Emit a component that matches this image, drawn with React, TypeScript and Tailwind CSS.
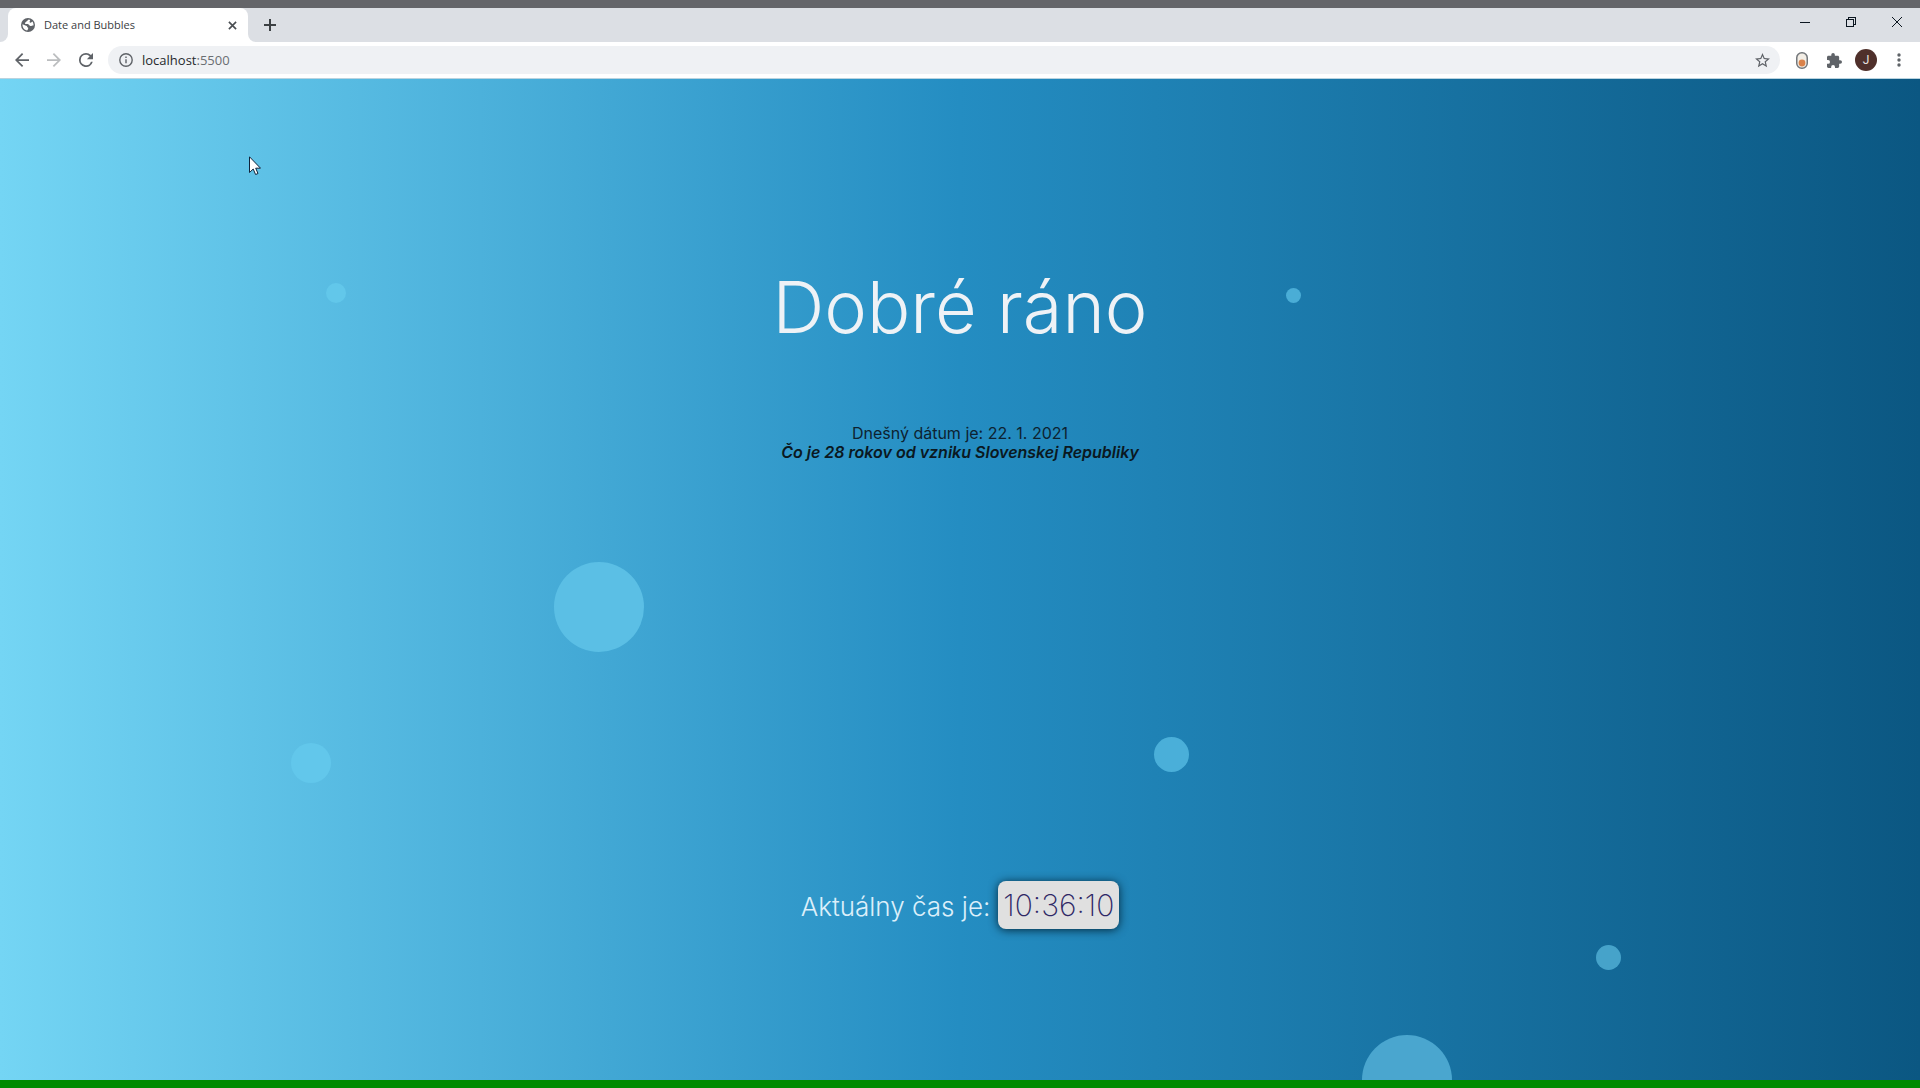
import React from "react";

type Bubble = { id: string; className: string };

const bubbles: Bubble[] = [
  { id: "a", className: "left-[326px] top-[204px] size-5 bg-[#62c7ea]" },
  { id: "b", className: "left-[1286px] top-[209px] size-[15px] bg-[#4aadd6]" },
  { id: "c", className: "left-[554px] top-[483px] size-[90px] bg-[#5bbfe5]" },
  { id: "d", className: "left-[291px] top-[664px] size-10 bg-[#62c7eb]" },
  { id: "e", className: "left-[1154px] top-[658px] size-[35px] bg-[#4aafd9]" },
  { id: "f", className: "left-[1596px] top-[866px] size-[25px] bg-[#46a3ca]" },
  { id: "g", className: "left-[1362px] top-[956px] size-[90px] bg-[#4aa6cf]" },
];

function GlobeIcon() {
  return (
    <svg viewBox="0 0 14 14" className="size-[14px]" aria-hidden="true">
      <circle cx="7" cy="7" r="7" fill="#5f6368" />
      <path d="M8.2 1.6C8.600 2.600 7.800 3.400 6.600 3.500C6.800 4.800 5.800 5.200 5 5.400C5.200 6.200 5.800 6.400 7.200 6.300C8.600 6.300 9 7.400 9.200 8C10 8.200 10.400 8.600 10.400 9.400C11.400 10.200 12.600 8.400 12.600 7C12.600 4.200 10.600 2 8.200 1.600Z" fill="#5f6368" />
      <path d="M7.900 1.500C8.500 2.700 7.700 3.400 6.500 3.600C6.500 4.700 5.600 5 4.800 5.200C4.900 6.200 5.700 6.400 7 6.300C8.300 6.300 8.800 7.200 9 8.200L11.200 8.400C10.500 10.400 8.700 11.500 6.400 12.500V10.600C5.300 10.500 4.900 9.800 4.900 8.800L1.500 5.800C2 3.400 4.600 1.200 7.900 1.500Z" fill="none" />
      <path d="M1.500 6.200 4.400 7.400C5.700 7.500 6.300 8.300 6.300 9.300C7.600 9.500 7.600 10.700 6.200 12.400C3.200 12 1.300 9.500 1.500 6.200ZM7.700 1.500 5.700 3.300C5.200 4.200 3.900 4.400 3.900 5.500C4.500 6.500 6 5.900 7.200 6.200C8.500 6.600 8.300 7.800 9.500 8C10.700 8.100 11.100 7.400 12.500 7.600C12.700 6.300 12.200 4.600 11.300 3.600C10.700 4.500 9.700 5 8.900 4.500C8.100 3.900 9 2.900 9.200 1.900Z" fill="#fff" />
    </svg>
  );
}

function TabStrip() {
  return (
    <div className="flex h-[34px] items-stretch bg-[#dcdfe4]">
      <div className="flex w-2 bg-white">
        <div className="flex-1 rounded-br-lg bg-[#dcdfe4]" />
      </div>
      <div className="flex w-60 items-center rounded-t-lg bg-white pl-[13px] pr-2">
        <GlobeIcon />
        <span className="ml-[9px] flex-1 text-[11px] leading-4 text-[#3c4043]">Date and Bubbles</span>
        <button type="button" aria-label="Close tab" className="grid size-4 place-items-center text-[#4a4e52]">
          <svg viewBox="0 0 10 10" className="size-[9px]" stroke="currentColor" strokeWidth="1.8" aria-hidden="true">
            <path d="M1 1 9 9M9 1 1 9" />
          </svg>
        </button>
      </div>
      <div className="flex w-2 bg-white">
        <div className="flex-1 rounded-bl-lg bg-[#dcdfe4]" />
      </div>
      <button type="button" aria-label="New tab" className="grid w-7 place-items-center text-[#3c4043]">
        <svg viewBox="0 0 12 12" className="size-3" stroke="currentColor" strokeWidth="2" aria-hidden="true">
          <path d="M6 0V12M0 6H12" />
        </svg>
      </button>
      <div className="ml-auto flex pb-[7px] text-[#0c1620]">
        <button type="button" aria-label="Minimize" className="grid w-[46px] place-items-center">
          <svg viewBox="0 0 10 10" className="size-[10px]" stroke="currentColor" shapeRendering="crispEdges" aria-hidden="true">
            <path d="M0 5.5H10" />
          </svg>
        </button>
        <button type="button" aria-label="Restore" className="grid w-[46px] place-items-center">
          <svg viewBox="0 0 10 10" className="size-[10px]" fill="none" stroke="currentColor" shapeRendering="crispEdges" aria-hidden="true">
            <path d="M.5 2.5H7.5V9.5H.5ZM2.5 2.5V.5H9.5V7.5H7.5" />
          </svg>
        </button>
        <button type="button" aria-label="Close" className="grid w-[46px] place-items-center">
          <svg viewBox="0 0 10 10" className="size-[10px]" stroke="currentColor" aria-hidden="true">
            <path d="M0 0 10 10M10 0 0 10" />
          </svg>
        </button>
      </div>
    </div>
  );
}

function Toolbar() {
  return (
    <div className="flex h-[37px] items-center border-b border-[#b9d3df] bg-white pl-[13px] pr-[11px]">
      <button type="button" aria-label="Back" className="text-[#5f6368]">
        <svg viewBox="4 4 16 16" className="mx-[2px] size-[14px]" fill="currentColor" aria-hidden="true">
          <path d="M20 11H7.83l5.59-5.59L12 4l-8 8 8 8 1.41-1.41L7.83 13H20v-2z" />
        </svg>
      </button>
      <button type="button" aria-label="Forward" className="ml-[14px] text-[#bbbdbf]">
        <svg viewBox="4 4 16 16" className="mx-[2px] size-[14px]" fill="currentColor" aria-hidden="true">
          <path d="M12 4l-1.41 1.41L16.17 11H4v2h12.17l-5.58 5.59L12 20l8-8z" />
        </svg>
      </button>
      <button type="button" aria-label="Reload" className="ml-[14px] text-[#5f6368]">
        <svg viewBox="4 4 16 16" className="mx-[2px] size-[14px]" fill="currentColor" aria-hidden="true">
          <path d="M17.65 6.35A7.96 7.96 0 0 0 12 4a8 8 0 1 0 7.73 10h-2.08A6 6 0 1 1 12 6c1.66 0 3.14.69 4.22 1.78L13 11h7V4l-2.35 2.35z" />
        </svg>
      </button>
      <div className="ml-[13px] flex h-7 flex-1 items-center rounded-full bg-[#eff1f4] pl-[11px] pr-[10px]">
        <svg viewBox="0 0 14 14" className="size-[14px] text-[#5f6368]" fill="none" stroke="currentColor" strokeWidth="1.4" aria-hidden="true">
          <circle cx="7" cy="7" r="6.2" />
          <path d="M7 6.2V10.3M7 3.6V5" />
        </svg>
        <div className="ml-[9px] flex flex-1 text-[13px] leading-5 text-[#26292c]">
          <a href="#top">
            localhost<span className="text-[#6a6e72]">:5500</span>
          </a>
        </div>
        <button type="button" aria-label="Bookmark this tab" className="text-[#5f6368]">
          <svg viewBox="2 2 20 20" className="size-[15px]" fill="currentColor" aria-hidden="true">
            <path d="M22 9.24l-7.19-.62L12 2 9.19 8.63 2 9.24l5.46 4.73L5.82 21 12 17.27 18.18 21l-1.63-7.03L22 9.24zM12 15.4l-3.76 2.27 1-4.28-3.32-2.88 4.38-.38L12 6.1l1.71 4.04 4.38.38-3.32 2.88 1 4.28L12 15.4z" />
          </svg>
        </button>
      </div>
      <button type="button" aria-label="Extension" className="ml-4">
        <svg viewBox="0 0 12 17" className="h-[17px] w-3" aria-hidden="true">
          <rect x=".75" y=".75" width="10.5" height="15.5" rx="5" fill="#f3eee6" stroke="#73777b" strokeWidth="1.5" />
          <circle cx="6" cy="11" r="3.4" fill="#d9824a" />
        </svg>
      </button>
      <button type="button" aria-label="Extensions" className="ml-[19px] text-[#5f6368]">
        <svg viewBox="2 1 21 21" className="size-[15px]" fill="currentColor" aria-hidden="true">
          <path d="M20.5 11H19V7c0-1.1-.9-2-2-2h-4V3.5a2.5 2.5 0 0 0-5 0V5H4c-1.1 0-2 .9-2 2v3.8h1.5a2.7 2.7 0 0 1 0 5.4H2V20c0 1.1.9 2 2 2h3.800v-1.5a2.7 2.7 0 0 1 5.4 0V22H17c1.1 0 2-.9 2-2v-4h1.5a2.5 2.5 0 0 0 0-5z" />
        </svg>
      </button>
      <button type="button" aria-label="Profile" className="ml-[13px] grid size-[22px] place-items-center rounded-full bg-[#4f302b] font-['Roboto',sans-serif] text-xs text-[#e8e2e0]">
        J
      </button>
      <button type="button" aria-label="Menu" className="ml-3 grid w-5 place-items-center text-[#5f6368]">
        <svg viewBox="0 0 4 14" className="h-[14px] w-1" fill="currentColor" aria-hidden="true">
          <circle cx="2" cy="2" r="1.7" />
          <circle cx="2" cy="7" r="1.7" />
          <circle cx="2" cy="12" r="1.7" />
        </svg>
      </button>
    </div>
  );
}

export default function App() {
  return (
    <div id="top" className="flex min-h-screen flex-col font-['Open_Sans',sans-serif]">
      <div className="h-2 bg-[#646569]" />
      <header>
        <TabStrip />
        <Toolbar />
      </header>
      <main className="relative flex flex-1 flex-col items-center overflow-hidden bg-[linear-gradient(to_right,#74d5f4,#248dc2_50%,#0b5782)] pt-[186px] pb-[151px] font-['Inter',sans-serif]">
        {bubbles.map((b) => (
          <span key={b.id} aria-hidden="true" className={`absolute rounded-full ${b.className}`} />
        ))}
        <h1 className="text-[72px] leading-[84px] font-light text-[#eef2f6]">Dobré ráno</h1>
        <div className="mt-[75px] text-center text-base leading-[19px] text-[#0d2230]">
          <p>Dnešný dátum je: 22. 1. 2021</p>
          <p className="font-semibold italic text-[#0a1821]">Čo je 28 rokov od vzniku Slovenskej Republiky</p>
        </div>
        <div className="mt-auto flex items-center gap-2">
          <span className="pt-1 text-[26px] leading-8 font-light text-[#dceffa]">Aktuálny čas je:</span>
          <time className="grid h-12 place-items-center rounded-lg bg-[#e0e0e0] px-[5px] text-[30px] font-extralight text-[#2f2866] shadow-[0_1px_10px_#04283c]">
            10:36:10
          </time>
        </div>
        <svg viewBox="0 0 12 19" className="absolute top-[77px] left-[249px] h-[19px] w-3" aria-hidden="true">
          <path d="M.5.8V16.500L4.200 13 6.600 18.500 9 17.500 6.700 12.200H11.500Z" fill="#fff" stroke="#10233a" />
        </svg>
      </main>
      <div className="h-2 bg-[#008a00]" />
    </div>
  );
}
